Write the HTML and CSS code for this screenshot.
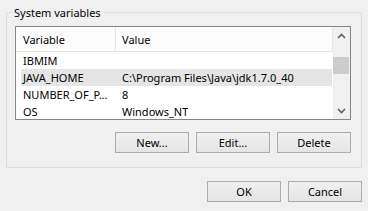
FILE: index.html
```html
<!DOCTYPE html>
<html>
<head>
<meta charset="utf-8">
<link rel="stylesheet" href="styles.css">
</head>
<body>
<div class="dialog">
  <fieldset class="group">
    <legend class="group-title">System variables</legend>
    <div class="listbox">
      <div class="table">
        <div class="header">
          <div class="hcell hcell-var">Variable</div>
          <div class="hcell hcell-val">Value</div>
        </div>
        <div class="rows">
          <div class="row"><div class="cell cell-var">IBMIM</div><div class="cell cell-val"></div></div>
          <div class="row row-selected"><div class="cell cell-var">JAVA_HOME</div><div class="cell cell-val">C:\Program Files\Java\jdk1.7.0_40</div></div>
          <div class="row"><div class="cell cell-var">NUMBER_OF_P…</div><div class="cell cell-val">8</div></div>
          <div class="row"><div class="cell cell-var">OS</div><div class="cell cell-val">Windows_NT</div></div>
        </div>
      </div>
      <div class="scrollbar">
        <div class="sb-arrow">
          <svg width="9" height="6" viewBox="0 0 9 6"><polyline points="1,5 4.5,1.5 8,5" fill="none" stroke="#606060" stroke-width="1.6"/></svg>
        </div>
        <div class="sb-gap"></div>
        <div class="sb-thumb"></div>
        <div class="sb-track"></div>
        <div class="sb-arrow">
          <svg width="9" height="6" viewBox="0 0 9 6"><polyline points="1,1 4.5,4.5 8,1" fill="none" stroke="#606060" stroke-width="1.6"/></svg>
        </div>
      </div>
    </div>
    <div class="button-row">
      <button class="btn">New...</button>
      <button class="btn">Edit...</button>
      <button class="btn">Delete</button>
    </div>
  </fieldset>
  <div class="footer">
    <button class="btn">OK</button>
    <button class="btn">Cancel</button>
  </div>
</div>
</body>
</html>
```

FILE: styles.css
```css
html, body {
  margin: 0;
  padding: 0;
  background: #f0f0f0;
}
body {
  font-family: "Noto Sans", "Liberation Sans", sans-serif;
  font-size: 11px;
  color: #000;
  width: 368px;
  height: 211px;
  overflow: hidden;
}
.dialog {
  padding: 4px 6px 0 6px;
}
.group {
  margin: 0;
  padding: 0 10px 14px 8px;
  border: 1px solid #dcdcdc;
  min-inline-size: 0;
}
.group-title {
  margin-left: -3px;
  padding: 0 2px;
  line-height: 17px;
  height: 17px;
}
.listbox {
  margin-top: 5px;
  box-sizing: border-box;
  width: 336px;
  height: 94px;
  border: 1px solid #828790;
  background: #fff;
  display: flex;
}
.table {
  width: 317px;
  display: flex;
  flex-direction: column;
  overflow: hidden;
}
.header {
  display: flex;
  height: 24px;
  background: #fcfcfc;
  border-bottom: 1px solid #e5e5e5;
  border-right: 1px solid #e5e5e5;
  flex-shrink: 0;
}
.hcell {
  display: flex;
  align-items: center;
  padding-top: 1px;
}
.hcell-var {
  width: 92px;
  padding-left: 7px;
  border-right: 1px solid #e5e5e5;
}
.hcell-val {
  padding-left: 6px;
}
.rows {
  flex: 1;
  overflow: hidden;
}
.row {
  display: flex;
  height: 17px;
  align-items: center;
  margin-left: 5px;
  margin-right: 1px;
}
.row-selected {
  background: #e5e5e5;
}
.cell {
  white-space: nowrap;
  overflow: hidden;
}
.cell-var {
  width: 93px;
  padding-left: 2px;
}
.cell-val {
  padding-left: 6px;
}
.scrollbar {
  width: 17px;
  background: #f0f0f0;
  display: flex;
  flex-direction: column;
}
.sb-arrow {
  height: 17px;
  display: flex;
  align-items: center;
  justify-content: center;
  flex-shrink: 0;
}
.sb-gap {
  height: 13px;
  flex-shrink: 0;
}
.sb-thumb {
  height: 17px;
  margin: 0 1px 0 0;
  background: #cdcdcd;
  flex-shrink: 0;
}
.sb-track {
  flex: 1;
}
.button-row {
  display: flex;
  justify-content: flex-end;
  gap: 7px;
  margin-top: 12px;
  width: 336px;
}
.btn {
  box-sizing: border-box;
  width: 74px;
  height: 21px;
  margin: 0;
  padding: 0;
  border: 1px solid #acacac;
  background: linear-gradient(#f0f0f0, #e5e5e5);
  font-family: "Noto Sans", "Liberation Sans", sans-serif;
  font-size: 11px;
  color: #000;
}
.footer {
  display: flex;
  justify-content: flex-end;
  gap: 7px;
  margin-top: 13px;
}
```
